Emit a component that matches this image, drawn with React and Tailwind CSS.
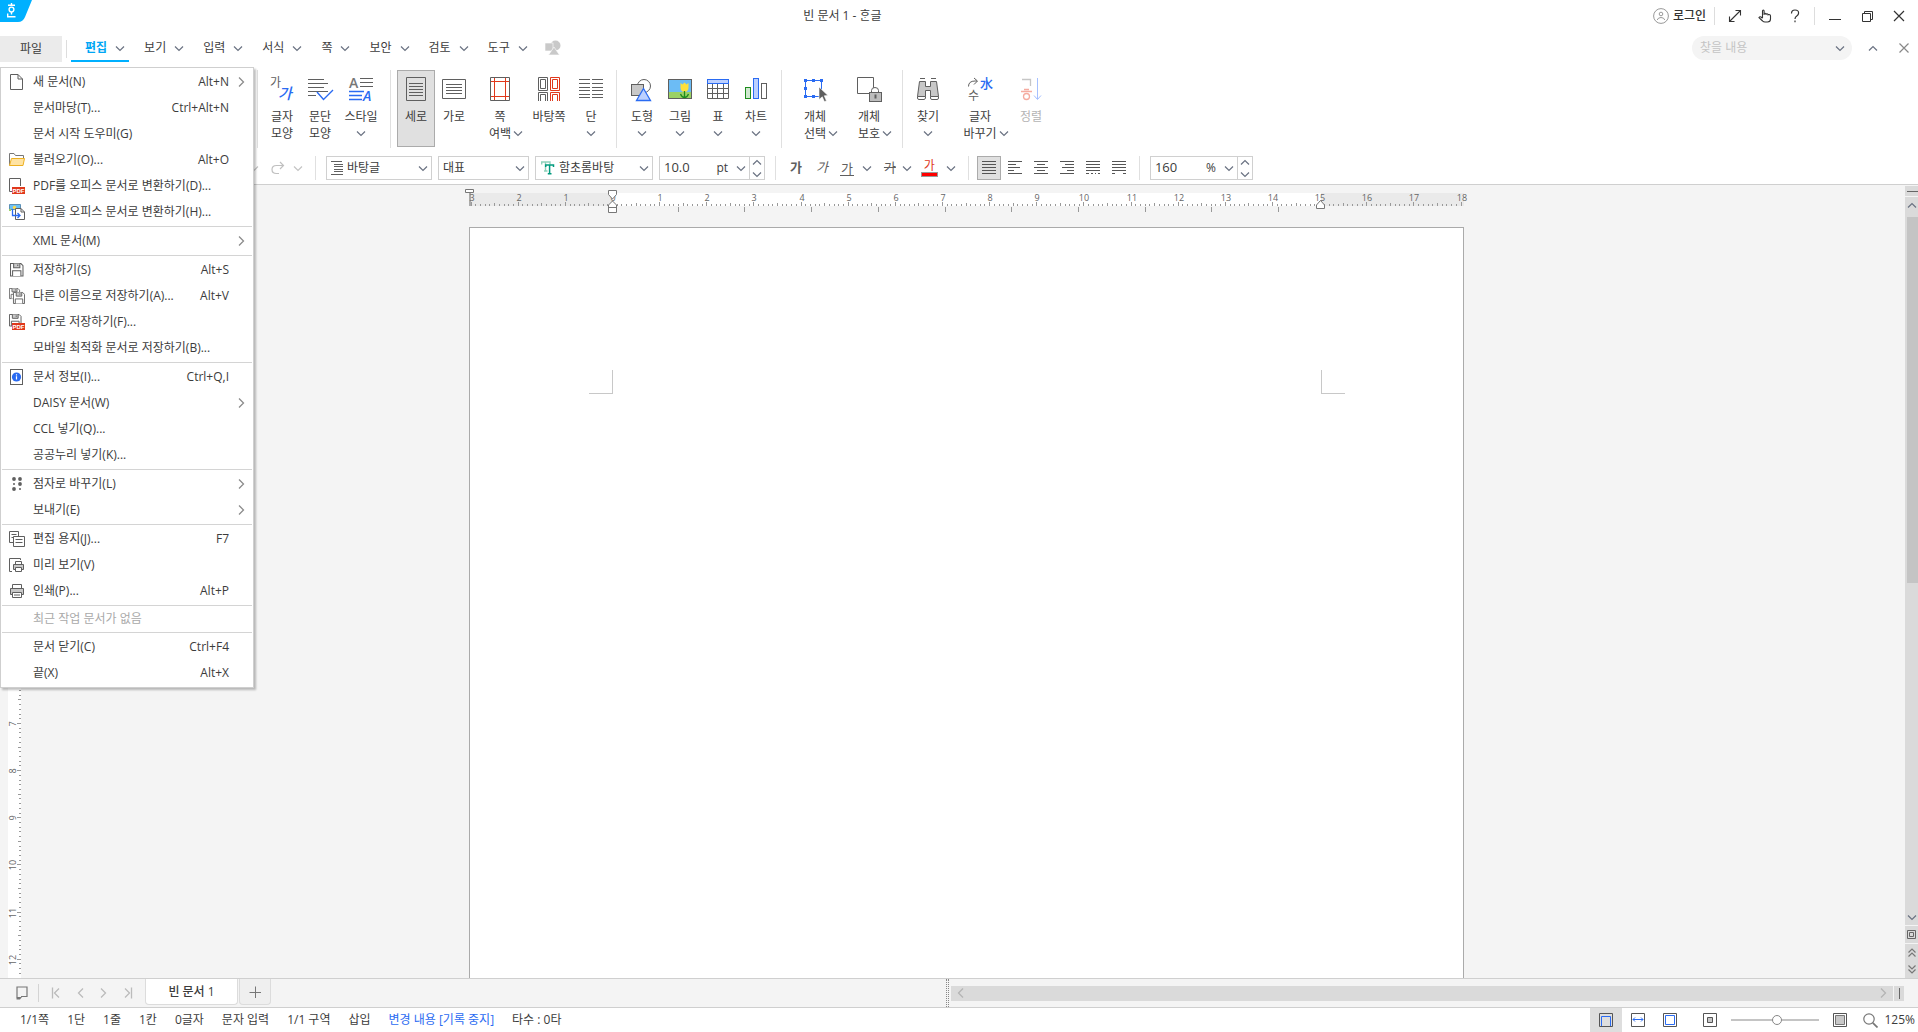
import { useState } from 'react';

const CHEVRONS = {
  down: 'M1 1.5 L5 5.5 L9 1.5',
  up: 'M1 5.5 L5 1.5 L9 5.5',
};

const Chevron = ({ dir = 'down', className = 'text-gray-500' }) => (
  <svg width="10" height="7" viewBox="0 0 10 7" fill="none" stroke="currentColor" strokeWidth="1.2" className={`shrink-0 ${className}`}>
    <path d={CHEVRONS[dir]} />
  </svg>
);

const ChevronSide = ({ flip, bar, className = 'text-[#8c8c8c]' }) => (
  <svg width="10" height="12" viewBox="0 0 10 12" fill="none" stroke="currentColor" strokeWidth="1.3" className={`shrink-0 ${flip ? '-scale-x-100' : ''} ${className}`}>
    <path d="M2 1.5 L6.5 6 L2 10.5" />
    {bar && <path d="M8.5 0.5 V11.5" />}
  </svg>
);

// ---------- menu icons (16x16) ----------

const Floppy = ({ x = 0, y = 0, s = 13 }) => (
  <g transform={`translate(${x} ${y}) scale(${s / 13})`}>
    <path d="M0.5 0.5 H10.5 L12.5 2.5 V12.5 H0.5 Z" fill="#fff" stroke="#5f5f5f" />
    <path d="M3.5 0.5 V4.5 H9.5 V0.5" fill="#c8c8c8" stroke="#5f5f5f" />
    <path d="M7.5 1.5 V3" stroke="#5f5f5f" />
    <path d="M2.5 12.5 V7.5 H10.5 V12.5" fill="#fff" stroke="#5f5f5f" />
  </g>
);

const PdfBadge = () => (
  <>
    <rect x="3" y="9" width="13" height="7" fill="#e0381b" />
    <text x="9.5" y="15" fontSize="6" fontWeight="700" textAnchor="middle" fill="#fff" fontFamily="Liberation Sans, sans-serif">PDF</text>
  </>
);

const menuIcons = {
  newDoc: (
    <path d="M1.5 0.5 H9 L13.5 5 V15.5 H1.5 Z M9 0.5 V5 H13.5" fill="#fff" stroke="#5f5f5f" />
  ),
  open: (
    <>
      <path d="M0.5 13.5 V1.5 H5 L6.5 3.5 H14.5 V6" fill="#fff" stroke="#777" />
      <path d="M2.5 6.5 H15.5 L14 13.5 H0.5 Z" fill="#ffe3a3" stroke="#edb021" />
    </>
  ),
  pdfOpen: (
    <>
      <path d="M3 13.5 H0.5 V0.5 H11.5 V8" fill="#fff" stroke="#5f5f5f" />
      <PdfBadge />
    </>
  ),
  imageOpen: (
    <>
      <path d="M0.5 0.5 H11.5 V5.5 H0.5 Z" fill="#6cc0f5" stroke="#5b8fb5" />
      <circle cx="5.5" cy="3.5" r="1.7" fill="#ffd94a" />
      <path d="M0 5 H2 V7 H0 Z" fill="#9bd165" />
      <path d="M6.5 4.5 H12 L15.5 8 V15.5 H6.5 Z" fill="#fff" stroke="#5f5f5f" />
      <path d="M12 4.5 V8 H15.5" fill="none" stroke="#5f5f5f" />
      <path d="M3.5 5 V11.5 H11 M8.5 9 L11 11.5 L8.5 14" fill="none" stroke="#2a6bf2" strokeWidth="1.3" />
    </>
  ),
  save: <Floppy x={1} y={1} s={13.5} />,
  saveAs: (
    <>
      <Floppy s={11} />
      <Floppy x={4} y={4} s={12} />
    </>
  ),
  savePdf: (
    <>
      <Floppy s={12.5} />
      <PdfBadge />
    </>
  ),
  info: (
    <>
      <rect x="1.5" y="0.5" width="12" height="15" fill="#fff" stroke="#5f5f5f" />
      <circle cx="7.5" cy="8" r="4.6" fill="#2a6bf2" />
      <path d="M7.5 7.3 V10.6 M7.5 5.2 V6.4" stroke="#fff" strokeWidth="1.2" />
    </>
  ),
  braille: (
    <g fill="#5f5f5f">
      <circle cx="5" cy="3" r="1.9" />
      <circle cx="11" cy="3" r="1.9" />
      <circle cx="5" cy="8" r="1" />
      <circle cx="11" cy="8" r="1.9" />
      <circle cx="5" cy="13" r="1.9" />
      <circle cx="11" cy="13" r="1" />
    </g>
  ),
  pageSetup: (
    <>
      <path d="M0.5 0.5 H9.5 V11.5 H0.5 Z M2.5 3.5 H7.5 M2.5 6.5 H4" fill="#fff" stroke="#5f5f5f" />
      <path d="M4.5 5.5 H15.5 V15.5 H4.5 Z M6.5 8.5 H13.5 M6.5 11.5 H13.5" fill="#fff" stroke="#5f5f5f" />
    </>
  ),
  preview: (
    <>
      <path d="M3 14.5 H0.5 V1.5 H11.5 V3" fill="#fff" stroke="#5f5f5f" />
      <path d="M6.5 7.5 V4.5 H12.5 V7.5" fill="#fff" stroke="#5f5f5f" />
      <path d="M4.5 7.5 H14.5 V12.5 H4.5 Z" fill="#c8c8c8" stroke="#5f5f5f" />
      <path d="M6.5 10.5 H12.5 V14.5 H6.5 Z" fill="#fff" stroke="#5f5f5f" />
    </>
  ),
  print: (
    <>
      <path d="M3.5 5.5 V1.5 H12.5 V5.5" fill="#fff" stroke="#5f5f5f" />
      <path d="M1.5 5.5 H14.5 V11.5 H1.5 Z" fill="#c8c8c8" stroke="#5f5f5f" />
      <path d="M3.5 9.5 H12.5 V14.5 H3.5 Z M5 12 H11" fill="#fff" stroke="#5f5f5f" />
    </>
  ),
};

const MENU = [
  [
    { label: '새 문서(N)', keys: 'Alt+N', icon: 'newDoc', sub: true },
    { label: '문서마당(T)...', keys: 'Ctrl+Alt+N' },
    { label: '문서 시작 도우미(G)' },
    { label: '불러오기(O)...', keys: 'Alt+O', icon: 'open' },
    { label: 'PDF를 오피스 문서로 변환하기(D)...', icon: 'pdfOpen' },
    { label: '그림을 오피스 문서로 변환하기(H)...', icon: 'imageOpen' },
  ],
  [{ label: 'XML 문서(M)', sub: true }],
  [
    { label: '저장하기(S)', keys: 'Alt+S', icon: 'save' },
    { label: '다른 이름으로 저장하기(A)...', keys: 'Alt+V', icon: 'saveAs' },
    { label: 'PDF로 저장하기(F)...', icon: 'savePdf' },
    { label: '모바일 최적화 문서로 저장하기(B)...' },
  ],
  [
    { label: '문서 정보(I)...', keys: 'Ctrl+Q,I', icon: 'info' },
    { label: 'DAISY 문서(W)', sub: true },
    { label: 'CCL 넣기(Q)...' },
    { label: '공공누리 넣기(K)...' },
  ],
  [
    { label: '점자로 바꾸기(L)', icon: 'braille', sub: true },
    { label: '보내기(E)', sub: true },
  ],
  [
    { label: '편집 용지(J)...', keys: 'F7', icon: 'pageSetup' },
    { label: '미리 보기(V)', icon: 'preview' },
    { label: '인쇄(P)...', keys: 'Alt+P', icon: 'print' },
  ],
  [{ label: '최근 작업 문서가 없음', disabled: true }],
  [
    { label: '문서 닫기(C)', keys: 'Ctrl+F4' },
    { label: '끝(X)', keys: 'Alt+X' },
  ],
];

const FileMenu = () => (
  <div className="absolute left-0 top-[67px] z-10 w-[254px] border border-[#cfcfcf] bg-white px-px py-px shadow-[2px_2px_2px_rgba(0,0,0,0.25)]">
    {MENU.map((group, i) => (
      <div key={group[0].label} className={i > 0 ? 'mt-px border-t border-[#d4d4d4] pt-px' : ''}>
        {group.map((item) => (
          <button
            key={item.label}
            disabled={item.disabled}
            className={`flex w-full items-center pl-[7px] pr-[5px] text-left ${item.disabled ? 'h-6 text-[#a9a9a9]' : 'h-[26px]'}`}
          >
            <span className="w-6 shrink-0">
              {item.icon && (
                <svg width="16" height="16" viewBox="0 0 16 16" fill="none">{menuIcons[item.icon]}</svg>
              )}
            </span>
            <span className="flex-1 whitespace-nowrap">{item.label}</span>
            <span>{item.keys}</span>
            <span className="flex w-[18px] justify-end">{item.sub && <ChevronSide />}</span>
          </button>
        ))}
      </div>
    ))}
  </div>
);

// ---------- title bar ----------

const TitleBar = () => (
  <header className="flex h-8 items-center">
    <svg width="32" height="22" viewBox="0 0 32 22" className="self-start" fill="none">
      <path d="M0 0 H32 L25 17 Q23 22 18 22 H0 Z" fill="#00b0ff" />
      <g stroke="#fff" strokeWidth="1.4">
        <path d="M11.5 3 V5 M8 5.2 H15" />
        <circle cx="11.5" cy="9.5" r="2.4" />
        <path d="M11.5 12 V14.5 M7.7 13.500 V16.800 H15.500" />
      </g>
    </svg>
    <h1 className="flex-1 text-center text-xs">빈 문서 1 - ᄒᆞᆫ글</h1>
    <div className="flex h-8 items-center text-[#333]">
      <button className="flex items-center gap-1 font-medium">
        <svg width="16" height="16" viewBox="0 0 16 16" fill="none" stroke="#999">
          <circle cx="8" cy="8" r="7.4" />
          <circle cx="8" cy="6" r="1.8" />
          <path d="M4.2 12 Q5 9.5 8 9.5 Q11 9.5 11.8 12" />
        </svg>
        로그인
      </button>
      <span className="ml-2 h-[18px] w-px bg-[#ddd]" />
      <button aria-label="전체 화면" className="ml-[13px]">
        <svg width="14" height="14" viewBox="0 0 14 14" fill="none" stroke="currentColor" strokeWidth="1.1">
          <path d="M1.5 12.5 L12.5 1.5 M7.5 1.5 H12.5 V6.5 M1.5 7.5 V12.5 H6.5" />
        </svg>
      </button>
      <button aria-label="터치 모드" className="ml-4">
        <svg width="14" height="14" viewBox="0 0 14 14" fill="none" stroke="currentColor" strokeWidth="1.1">
          <path d="M4.5 9 V2 Q4.5 1 5.3 1 Q6.1 1 6.1 2 V6 V4.6 Q7.3 3.8 8 4.8 V6 V5 Q9.3 4.3 10 5.3 V6.4 V5.6 Q12.5 5.2 12.5 7 V10 Q12.5 13 9.5 13 H7 Q5.5 13 4.6 12 L1 8.6 Q1.8 7.2 3 8 L4.5 9.2" />
        </svg>
      </button>
      <button aria-label="도움말" className="ml-4">
        <svg width="14" height="14" viewBox="0 0 14 14" fill="none" stroke="currentColor" strokeWidth="1.2">
          <path d="M3.5 4.5 Q3.5 1 7 1 Q10.6 1 10.6 4 Q10.6 5.8 8.8 6.9 Q7 8 7 10 M7 11.5 V13.3" />
        </svg>
      </button>
      <span className="ml-3 h-[18px] w-px bg-[#ddd]" />
      <button aria-label="최소화" className="ml-[14px]">
        <svg width="12" height="12" viewBox="0 0 12 12" stroke="currentColor"><path d="M0 9.5 H12" /></svg>
      </button>
      <button aria-label="이전 크기로" className="ml-5">
        <svg width="12" height="12" viewBox="0 0 12 12" fill="none" stroke="currentColor">
          <path d="M1.5 3.5 H9.5 V11.5 H1.5 Z M3.5 3.5 V1.5 H11.5 V9.5 H9.5" />
        </svg>
      </button>
      <button aria-label="닫기" className="ml-5 mr-[13px]">
        <svg width="12" height="12" viewBox="0 0 12 12" stroke="currentColor" strokeWidth="1.2"><path d="M1 1 L11 11 M11 1 L1 11" /></svg>
      </button>
    </div>
  </header>
);

const TABS = ['편집', '보기', '입력', '서식', '쪽', '보안', '검토', '도구'];

const MenuBar = ({ tab, setTab }) => (
  <nav className="flex h-[35px] items-start pt-1">
    <button className="h-[26px] w-[62px] bg-[#ebebeb]">파일</button>
    <span className="mx-1 mt-1 h-[18px] w-px bg-[#ddd]" />
    {TABS.map((name) => (
      <button
        key={name}
        onClick={() => setTab(name)}
        className={`mr-px flex h-[26px] items-center gap-2 border-b-2 pl-[14px] pr-1 ${
          tab === name ? 'border-[#00b0ff] font-bold text-[#00a6f4]' : 'border-transparent'
        }`}
      >
        {name}
        <Chevron />
      </button>
    ))}
    <svg width="16" height="16" viewBox="0 0 16 16" className="ml-3 mt-1" fill="#c9c9c9">
      <circle cx="10.5" cy="5.5" r="5" />
      <rect x="0" y="3" width="8" height="8" stroke="#fff" strokeWidth="0.6" />
      <path d="M9 7 L14.5 15 H3.5 Z" stroke="#fff" strokeWidth="0.6" />
    </svg>
    <div className="ml-auto flex h-6 items-center">
      <label className="flex h-6 w-40 items-center rounded-full bg-[#f4f4f4] pl-2 pr-[7px]">
        <input aria-label="찾을 내용" placeholder="찾을 내용" className="min-w-0 flex-1 bg-transparent outline-none placeholder:text-[#c4c4c4]" />
        <Chevron />
      </label>
      <button aria-label="리본 접기" className="ml-4"><Chevron dir="up" /></button>
      <button aria-label="문서 닫기" className="ml-[21px] mr-[9px]">
        <svg width="10" height="10" viewBox="0 0 10 10" stroke="#888" strokeWidth="1.2"><path d="M0.5 0.5 L9.5 9.5 M9.5 0.5 L0.5 9.5" /></svg>
      </button>
    </div>
  </nav>
);

// ---------- ribbon icons (24x24) ----------

const G = '#5f5f5f';
const B = '#2a6bf2';
const R = '#e0381b';
const KR = '"Noto Sans CJK KR", sans-serif';

const ribbonIcons = {
  charShape: (
    <>
      <text x="0" y="10" fontSize="12" fill={G} fontFamily={KR}>가</text>
      <text x="8" y="22" fontSize="15" fontStyle="italic" fontWeight="500" fill={B} fontFamily={KR}>가</text>
    </>
  ),
  paraShape: (
    <>
      <path d="M0 2.5 H16 M0 6.5 H20 M0 10.5 H16 M0 14.5 H20 M0 18.5 H8" stroke={G} />
      <path d="M9 15 L15.5 22.5 L25 13" stroke={B} strokeWidth="1.4" />
    </>
  ),
  style: (
    <>
      <text x="0" y="11" fontSize="14" fontWeight="600" fill="#777" fontFamily="Open Sans, sans-serif">A</text>
      <path d="M11 1.5 H24 M11 5.5 H24 M11 9.5 H24" stroke={G} />
      <path d="M0 14.5 H15 M0 18.5 H13 M0 22.5 H13" stroke={B} strokeWidth="1.3" />
      <text x="14" y="24" fontSize="14" fontWeight="600" fontStyle="italic" fill={B} fontFamily="Open Sans, sans-serif">A</text>
    </>
  ),
  portrait: (
    <path d="M2.5 0.5 H21.5 V23.5 H2.5 Z M5 6.5 H19 M5 9.5 H19 M5 12.5 H19 M5 15.5 H19 M5 18.5 H19" stroke={G} />
  ),
  landscape: (
    <path d="M0.5 2.5 H23.5 V21.5 H0.5 Z M4 7.5 H20 M4 10.5 H20 M4 13.5 H20 M4 16.5 H20" stroke={G} />
  ),
  margin: (
    <>
      <path d="M2.5 0.5 H21.5 V23.5 H2.5 Z" stroke={G} />
      <path d="M6.5 1 V23 M17.5 1 V23 M3 4.5 H21 M3 19.5 H21" stroke={R} />
    </>
  ),
  master: (
    <>
      <path d="M1.5 0.5 H10.5 V13.5 H1.5 Z M3.5 2.5 H8.5 V11.5 H3.5 Z M1.5 24 V15.5 H10.5 V24 M3.5 24 V17.5 H8.5 V24" stroke={G} />
      <path d="M13.5 0.5 H22.5 V13.5 H13.5 Z M15.5 2.5 H20.5 V11.5 H15.5 Z M13.5 24 V15.5 H22.5 V24 M15.5 24 V17.5 H20.5 V24" stroke={R} />
    </>
  ),
  columns: (
    <path d="M0 2.5 H11 M13 2.5 H24 M0 6.5 H11 M13 6.5 H24 M0 10.5 H11 M13 10.5 H24 M0 13.5 H11 M13 13.5 H24 M0 17.5 H11 M13 17.5 H24 M0 20.5 H11 M13 20.5 H24" stroke={G} />
  ),
  shapes: (
    <>
      <circle cx="14" cy="9" r="6.5" stroke={G} />
      <rect x="1.5" y="7.5" width="12" height="11" fill="#c8c8c8" stroke={G} />
      <path d="M13.5 11.5 L20.5 23.5 H6.5 Z" fill="#bcd0ff" stroke={B} strokeWidth="1.3" />
    </>
  ),
  picture: (
    <>
      <rect x="0.5" y="2.5" width="23" height="19" fill="#6cbcf5" stroke={G} />
      <rect x="1" y="15" width="22" height="6" fill="#9bd165" />
      <path d="M12.5 6 L14.5 7.5 L16.5 5.5 L18.5 7.5 L20.5 6 V11 Q20 15 16.5 15 Q13 15 12.5 11 Z" fill="#ffe03c" />
      <path d="M16.5 14 V20.5 M12.5 17 Q14 20.5 16.5 20.5 Q19 20.5 20.5 17" stroke="#1e8c1e" strokeWidth="1.3" />
    </>
  ),
  table: (
    <>
      <path d="M1.5 6.5 V21.5 H22.5 V6.5 M1.5 11.5 H22.5 M1.5 16.5 H22.5 M6.5 7 V21.5 M11.5 7 V21.5 M17.5 7 V21.5" stroke={G} />
      <rect x="1.5" y="2.5" width="21" height="4" fill="#bcd0ff" stroke={B} />
    </>
  ),
  chart: (
    <>
      <rect x="1.5" y="10.5" width="5" height="11" fill="#cfe8cf" stroke="#1e8c1e" />
      <rect x="9.5" y="1.5" width="5" height="20" fill="#bcd0ff" stroke={B} />
      <rect x="17.5" y="6.5" width="5" height="15" fill="#fff" stroke={G} />
    </>
  ),
  select: (
    <>
      <path d="M2.5 3.5 H18.5 V19.5 H2.5 Z" stroke={B} />
      <path d="M1 2 h3 v3 h-3z M9 2 h3 v3 h-3z M17 2 h3 v3 h-3z M1 10 h3 v3 h-3z M1 18 h3 v3 h-3z M9 18 h3 v3 h-3z" fill={B} />
      <path d="M16 10 L25 18.5 L21.3 18.8 L23.5 24 L21.3 24.5 L19.3 19.8 L16 22.5 Z" fill={G} stroke="#fff" strokeWidth="0.6" />
    </>
  ),
  protect: (
    <>
      <path d="M0.5 0.5 H16.5 V16.5 H0.5 Z" stroke={G} />
      <path d="M14.5 16 V13.5 Q14.5 10.5 18 10.5 Q21.5 10.5 21.5 13.5 V16" fill="#fff" stroke={G} />
      <rect x="12.5" y="15.5" width="12" height="9" fill="#bdbdbd" stroke={G} />
      <path d="M18.5 17.5 V21.5" stroke={G} strokeWidth="2" />
    </>
  ),
  find: (
    <>
      <path d="M4 1.5 H9 M15 1.5 H20" stroke={G} />
      <path d="M3.5 4.5 H9.5 V9.5 H14.5 V4.5 H20.5 L22.5 19.5 H14.5 V13.5 H9.5 V19.5 H1.5 Z" fill="#c8c8c8" stroke={G} />
      <path d="M1.5 19.5 H9.5 V21 Q9 22.5 8 22.5 H3 Q1.5 22.5 1.5 21 Z M14.5 19.5 H22.5 V21 Q22.5 22.5 21 22.5 H16 Q14.5 22.5 14.5 21 Z" fill="#fff" stroke={G} />
    </>
  ),
  replace: (
    <>
      <path d="M0.5 9.5 Q0.5 4 7 4 H9 M6 1 L9.5 4 L6 7.5" stroke={G} />
      <text x="12" y="11" fontSize="13" fontWeight="500" fill={B} fontFamily={KR}>水</text>
      <text x="0" y="23" fontSize="12" fill={G} fontFamily={KR}>수</text>
    </>
  ),
  sort: (
    <>
      <path d="M3 2.5 H11.5 V9" stroke="#c6c6c6" strokeWidth="1.3" />
      <path d="M5 12.5 H10 M2 14.5 H13" stroke="#f5aba0" strokeWidth="1.3" />
      <circle cx="7.5" cy="19.5" r="3" stroke="#f5aba0" strokeWidth="1.3" />
      <path d="M18.5 1 V22 M15 18.5 L18.5 22.5 L22 18.5" stroke="#a6c0ff" />
    </>
  ),
};

const RibbonButton = ({ icon, lines, width, arrow, active, disabled }) => (
  <button
    disabled={disabled}
    className={`flex h-[77px] flex-col items-center border pt-[6px] leading-[17px] ${width} ${
      active ? 'border-[#ababab] bg-[#e0e0e0]' : 'border-transparent'
    } ${disabled ? 'text-[#b4b4b4]' : ''}`}
  >
    <svg width="24" height="24" viewBox="0 0 24 24" fill="none" className="mb-[7px] shrink-0 overflow-visible">{ribbonIcons[icon]}</svg>
    <span className="whitespace-nowrap">{lines[0]}</span>
    <span className="flex h-[17px] items-center whitespace-nowrap">
      {lines[1]}
      {arrow && <Chevron className={lines[1] ? 'ml-[2px] -mr-3 text-gray-500' : 'text-gray-500'} />}
    </span>
  </button>
);

const Sep = ({ className }) => <span className={`w-px bg-[#e0e0e0] ${className}`} />;

const Ribbon = () => (
  <div className="flex h-20 items-start pl-[257px] pt-[3px]">
    <Sep className="mr-[5px] h-[78px]" />
    <RibbonButton icon="charShape" lines={['글자', '모양']} width="w-[38px]" />
    <RibbonButton icon="paraShape" lines={['문단', '모양']} width="w-[38px]" />
    <RibbonButton icon="style" lines={['스타일']} width="w-11" arrow />
    <Sep className="ml-[7px] mr-[6px] h-[78px]" />
    <RibbonButton icon="portrait" lines={['세로']} width="w-[38px]" active />
    <RibbonButton icon="landscape" lines={['가로']} width="w-[38px]" />
    <RibbonButton icon="margin" lines={['쪽', '여백']} width="w-[54px]" arrow />
    <RibbonButton icon="master" lines={['바탕쪽']} width="w-11" />
    <RibbonButton icon="columns" lines={['단']} width="w-10" arrow />
    <Sep className="ml-[5px] mr-[6px] h-[78px]" />
    <RibbonButton icon="shapes" lines={['도형']} width="w-[38px]" arrow />
    <RibbonButton icon="picture" lines={['그림']} width="w-[38px]" arrow />
    <RibbonButton icon="table" lines={['표']} width="w-[38px]" arrow />
    <RibbonButton icon="chart" lines={['차트']} width="w-[38px]" arrow />
    <Sep className="ml-[6px] mr-[10px] h-[78px]" />
    <RibbonButton icon="select" lines={['개체', '선택']} width="w-[46px]" arrow />
    <RibbonButton icon="protect" lines={['개체', '보호']} width="w-[62px]" arrow />
    <Sep className="ml-[2px] mr-[3px] h-[78px]" />
    <RibbonButton icon="find" lines={['찾기']} width="w-11" arrow />
    <RibbonButton icon="replace" lines={['글자', '바꾸기']} width="w-[60px]" arrow />
    <RibbonButton icon="sort" lines={['정렬']} width="w-[42px]" disabled />
  </div>
);

// ---------- formatting toolbar ----------

const Picker = ({ label, value, width, icon }) => (
  <label className={`mr-[6px] flex h-6 items-center border border-[#d0d0d0] pl-1 pr-[3px] ${width}`}>
    {icon}
    <select aria-label={label} className="min-w-0 flex-1 appearance-none bg-transparent outline-none">
      <option>{value}</option>
    </select>
    <Chevron />
  </label>
);

const Spinner = ({ label, value, unit, width }) => (
  <div className={`flex h-6 items-center border border-[#d0d0d0] ${width}`}>
    <input aria-label={label} defaultValue={value} className="min-w-0 flex-1 bg-transparent pl-1 text-[13px] outline-none" />
    <span className="mr-2">{unit}</span>
    <Chevron />
    <span className="ml-[3px] flex h-full w-[15px] flex-col items-center justify-between border-l border-[#d0d0d0] py-px">
      <button aria-label={`${label} 늘리기`} className="flex h-2 items-center"><Chevron dir="up" /></button>
      <button aria-label={`${label} 줄이기`} className="flex h-2 items-center"><Chevron /></button>
    </span>
  </div>
);

const ALIGN = [
  ['양쪽 정렬', 'M0 1.5 H14 M0 4.5 H14 M0 7.5 H14 M0 10.5 H14 M0 13.5 H14'],
  ['왼쪽 정렬', 'M0 1.5 H14 M0 4.5 H8 M0 7.5 H12 M0 10.5 H6 M0 13.5 H14'],
  ['가운데 정렬', 'M0 1.5 H14 M3 4.5 H11 M0 7.5 H14 M3 10.5 H11 M0 13.5 H14'],
  ['오른쪽 정렬', 'M0 1.5 H14 M5 4.5 H14 M2 7.5 H14 M7 10.5 H14 M0 13.5 H14'],
  ['배분 정렬', 'M0 1.5 H14 M0 4.5 H14 M0 7.5 H14 M0 10.5 H14 M0 13.5 H3 M5 13.5 H7 M9 13.5 H10 M12 13.5 H14'],
  ['나눔 정렬', 'M0 1.5 H14 M0 4.5 H14 M0 7.5 H14 M0 10.5 H14 M0 13.5 H3 M11 13.5 H14'],
];

const Toolbar = () => {
  const [align, setAlign] = useState('양쪽 정렬');
  return (
    <div className="flex h-[38px] items-center border-b border-[#cfcfcf] pl-[249px] pt-[5px]">
      <Chevron className="text-[#c4c4c4]" />
      <button aria-label="다시 실행" className="ml-3">
        <svg width="14" height="14" viewBox="0 0 14 14" fill="none" stroke="#c0c0c0" strokeWidth="1.2">
          <path d="M12 4.5 H5.5 Q1 4.5 1 8.5 Q1 12.5 5.5 12.5 H8 M9 1 L12.5 4.5 L9 8" />
        </svg>
      </button>
      <Chevron className="ml-2 text-[#c4c4c4]" />
      <Sep className="ml-3 mr-[10px] h-6" />
      <Picker
        label="스타일"
        value="바탕글"
        width="w-[106px]"
        icon={
          <svg width="12" height="14" viewBox="0 0 12 14" stroke="#5f5f5f" className="mr-1 shrink-0">
            <path d="M0 0.5 H11 M3 3.5 H12 M3 5.5 H12 M3 8.5 H12 M3 10.5 H12 M0 13.5 H12" />
          </svg>
        }
      />
      <Picker label="언어" value="대표" width="w-[91px]" />
      <Picker
        label="글꼴"
        value="함초롬바탕"
        width="w-[118px]"
        icon={
          <svg width="14" height="14" viewBox="0 0 14 14" fill="none" className="ml-px mr-1 shrink-0">
            <path d="M0.7 3.5 V1 H9 V3.5 M4.5 1 V10 M3 10 H6.5" stroke="#8fd1bb" strokeWidth="1.4" />
            <path d="M4.7 6 V4 H12.5 V6 M8.6 4 V12.5 M6.8 12.7 H10.5" stroke="#009a7e" strokeWidth="1.5" />
          </svg>
        }
      />
      <Spinner label="글자 크기" value="10.0" unit="pt" width="w-[106px]" />
      <Sep className="ml-[10px] mr-[14px] h-6" />
      <button className="text-[13px] font-bold text-[#5f5f5f]">가</button>
      <button className="ml-[14px] text-[13px] italic text-[#5f5f5f]">가</button>
      <button className="ml-3 border-b border-[#5f5f5f] px-px text-[13px] leading-[14px] text-[#5f5f5f]">가</button>
      <Chevron className="ml-2 text-gray-500" />
      <button className="ml-3 text-[13px] text-[#5f5f5f] line-through">가</button>
      <Chevron className="ml-[6px] text-gray-500" />
      <button className="ml-[9px] flex w-[17px] flex-col items-center text-[#e0381b]">
        <span className="leading-[13px]">가</span>
        <span className="h-[5px] w-[17px] border border-[#999] bg-[#ff0000]" />
      </button>
      <Chevron className="ml-2 text-gray-500" />
      <Sep className="ml-3 mr-2 h-6" />
      <div className="flex gap-[2px]">
        {ALIGN.map(([name, d]) => (
          <button
            key={name}
            aria-label={name}
            onClick={() => setAlign(name)}
            className={`flex size-6 items-center justify-center border ${align === name ? 'border-[#ababab] bg-[#e0e0e0]' : 'border-transparent'}`}
          >
            <svg width="14" height="14" viewBox="0 1 14 14" stroke="#555"><path d={d} /></svg>
          </button>
        ))}
      </div>
      <Sep className="ml-2 mr-[10px] h-6" />
      <Spinner label="줄 간격" value="160" unit="%" width="w-[103px]" />
    </div>
  );
};

// ---------- rulers and page ----------

const CM = 47.14;
const RULER_ZERO = 144;
const RULER_FONT = '"Open Sans", sans-serif';
const range = (from, to) => Array.from({ length: to - from + 1 }, (_, i) => from + i);
const tickSize = (n) => (n % 10 === 0 ? 4 : n % 5 === 0 ? 3 : 2);

const HorizontalRuler = () => (
  <svg width="995" height="42" viewBox="0 0 995 42" className="block overflow-visible">
    <rect x="0" y="8" width="995" height="13" fill="#eaeaea" />
    <rect x={RULER_ZERO} y="8" width="708" height="13" fill="#fff" />
    <rect x="0" y="8" width="2" height="13" fill="#aaa" />
    {range(-30, 180).map((n) => (
      <rect key={n} x={Math.round(RULER_ZERO - 1 + (n * CM) / 10)} y={21 - tickSize(n)} width="1" height={tickSize(n)} fill="#999" />
    ))}
    {range(1, 10).map((n) => (
      <rect key={n} x={Math.round(RULER_ZERO - 2 + n * 66.7)} y="22" width="1" height="5" fill="#999" />
    ))}
    {range(-3, 18).map((n) => (
      <text key={n} x={Math.round(RULER_ZERO + n * CM)} y="16" textAnchor="middle" fontSize="9" fill="#666" fontFamily={RULER_FONT}>{Math.abs(n)}</text>
    ))}
    <path d="M-3.5 4.5 H4.5 V7.5 H-3.5 Z" fill="#fff" stroke="#777" />
    <g fill="#fff" stroke="#777">
      <path d="M139.5 5.5 H147.5 V9.5 L143.5 14 L139.5 9.5 Z" />
      <path d="M143.5 16 L147.5 20 V27.5 H139.5 V20 Z M139.5 22.5 H147.5" />
      <path d="M851.5 15.5 L855.5 20 V23.5 H847.5 V20 Z" />
    </g>
  </svg>
);

const VerticalRuler = () => (
  <svg width="13" height="793" viewBox="0 0 13 793" className="block overflow-visible">
    <rect width="13" height="793" fill="#fff" />
    {range(0, 124).map((n) => {
      const y = Math.round(208 + (n * CM) / 10);
      return <rect key={n} x={13 - tickSize(n)} y={y} width={tickSize(n)} height="1" fill="#999" />;
    })}
    {range(1, 12).map((n) => {
      const y = Math.round(209 + n * CM);
      return (
        <text key={n} x="8" y={y} fontSize="9" fill="#666" textAnchor="middle" transform={`rotate(-90 8 ${y})`} fontFamily={RULER_FONT}>{n}</text>
      );
    })}
  </svg>
);

const VerticalScroll = () => (
  <div className="flex w-[13px] flex-col gap-px bg-[#f4f4f4] pt-px text-[#777]">
    <button aria-label="창 나누기" className="flex h-[10px] items-center bg-[#dadada] pl-[2px]">
      <span className="h-px w-full bg-[#666]" />
    </button>
    <div className="flex flex-1 flex-col bg-[#dadada]">
      <button aria-label="위로" className="mb-1 flex h-4 items-center justify-center"><Chevron dir="up" /></button>
      <div className="ml-[2px] h-[366px] bg-[#c4c4c4]" />
      <button aria-label="아래로" className="mt-auto flex h-4 items-center justify-center"><Chevron /></button>
    </div>
    <button aria-label="개체 찾기" className="flex h-[17px] items-center justify-center bg-[#dadada]">
      <svg width="9" height="9" viewBox="0 0 9 9" fill="none" stroke="#666"><path d="M0.5 0.5 H8.5 V8.5 H0.5 Z M2.5 2.5 H6.5 V6.5 H2.5 Z" /></svg>
    </button>
    <div className="flex h-[34px] flex-col items-center justify-around bg-[#dadada]">
      <button aria-label="이전 쪽">
        <svg width="8" height="9" viewBox="0 0 8 9" fill="none" stroke="#777" strokeWidth="1.2"><path d="M0.5 4.5 L4 1 L7.5 4.5 M0.5 8.5 L4 5 L7.5 8.5" /></svg>
      </button>
      <button aria-label="다음 쪽">
        <svg width="8" height="9" viewBox="0 0 8 9" fill="none" stroke="#777" strokeWidth="1.2"><path d="M0.5 0.5 L4 4 L7.5 0.5 M0.5 4.5 L4 8 L7.5 4.5" /></svg>
      </button>
    </div>
  </div>
);

const Editor = () => (
  <main className="flex min-h-0 flex-1 overflow-hidden bg-[#f4f4f4]">
    <div className="pl-2"><VerticalRuler /></div>
    <div className="flex min-w-0 flex-1 flex-col items-center pl-[7px]">
      <HorizontalRuler />
      <div className="flex w-[995px] flex-1 items-start justify-between border border-b-0 border-[#aaa] bg-white pl-[119px] pr-[118px] pt-[142px]">
        <span className="size-6 border-b border-r border-[#c8c8c8]" />
        <span className="size-6 border-b border-l border-[#c8c8c8]" />
      </div>
    </div>
    <VerticalScroll />
  </main>
);

// ---------- bottom bars ----------

const DocumentTabs = () => (
  <div className="flex h-[29px] items-center border-t border-[#cfcfcf] bg-[#f4f4f4]">
    <button aria-label="문서 탭 목록" className="ml-4">
      <svg width="12" height="14" viewBox="0 0 12 14" fill="none" stroke="#777" strokeWidth="1.2">
        <path d="M1 11.5 V1 H11 V10.5 H5" />
        <path d="M0.5 11 H6 L4 13.5 H0.5 Z" fill="#777" stroke="none" />
      </svg>
    </button>
    <span className="ml-[10px] h-[18px] w-px bg-[#d4d4d4]" />
    <div className="ml-3 flex items-center gap-[14px]">
      <button aria-label="처음"><ChevronSide flip bar className="text-[#bbb]" /></button>
      <button aria-label="이전"><ChevronSide flip className="text-[#bbb]" /></button>
      <button aria-label="다음"><ChevronSide className="text-[#bbb]" /></button>
      <button aria-label="마지막"><ChevronSide bar className="text-[#bbb]" /></button>
    </div>
    <button className="ml-3 h-[26px] w-[93px] self-start rounded-b border border-t-0 border-[#dcdcdc] bg-white font-medium">빈 문서 1</button>
    <button aria-label="새 탭" className="ml-px flex h-[26px] w-8 items-center justify-center self-start rounded-b border border-t-0 border-[#dcdcdc] bg-[#efefef]">
      <svg width="12" height="12" viewBox="0 0 12 12" stroke="#777"><path d="M0.5 6.5 H12 M6.5 0.5 V12" /></svg>
    </button>
    <div className="ml-auto flex h-full items-center">
      <span className="mr-[2px] h-full w-[3px] border-x border-dotted border-[#888]" />
      <div className="flex h-[15px] w-[942px] items-center justify-between bg-[#dadada] px-1">
        <button aria-label="왼쪽으로"><ChevronSide flip className="text-[#b4b4b4]" /></button>
        <button aria-label="오른쪽으로"><ChevronSide className="text-[#b4b4b4]" /></button>
      </div>
      <span className="ml-px mr-[14px] flex h-[15px] w-[10px] items-center justify-center bg-[#dadada]">
        <span className="h-[11px] w-px bg-[#666]" />
      </span>
    </div>
  </div>
);

const STATUS = ['1/1쪽', '1단', '1줄', '1칸', '0글자', '문자 입력', '1/1 구역', '삽입'];

const ViewIcon = ({ children }) => (
  <svg width="14" height="14" viewBox="0 0 14 14" fill="none">
    <path d="M0.5 0.5 H13.5 V13.5 H0.5 Z" stroke="#555" />
    {children}
  </svg>
);

const StatusBar = () => (
  <footer className="flex h-[25px] items-center border-t border-[#cfcfcf] bg-white">
    <div className="flex items-center gap-[18px] pl-5">
      {STATUS.map((s) => <span key={s}>{s}</span>)}
      <span className="text-[#2a6bf2]">변경 내용 [기록 중지]</span>
      <span>타수 : 0타</span>
    </div>
    <div className="ml-auto flex h-full items-center">
      <button aria-label="쪽 윤곽" className="flex h-full w-8 items-center justify-center bg-[#dedede]">
        <ViewIcon><path d="M2.5 13 V3.5 H11.5 V13" stroke="#2a6bf2" /></ViewIcon>
      </button>
      <button aria-label="폭 맞춤" className="flex h-full w-8 items-center justify-center">
        <ViewIcon><path d="M2 6.5 H12 M4 4.5 L2 6.5 L4 8.5 M10 4.5 L12 6.5 L10 8.5" stroke="#2a6bf2" /></ViewIcon>
      </button>
      <button aria-label="쪽 맞춤" className="flex h-full w-8 items-center justify-center">
        <ViewIcon><path d="M2.5 2.5 H11.5 V11.5 H2.5 Z" stroke="#2a6bf2" /></ViewIcon>
      </button>
      <button aria-label="축소" className="ml-[17px]">
        <ViewIcon><path d="M4.5 4.5 H9.5 V9.5 H4.5 Z" fill="#c8c8c8" stroke="#555" /></ViewIcon>
      </button>
      <input
        type="range"
        aria-label="확대 비율"
        defaultValue="52"
        className="mx-[14px] h-[2px] w-[88px] appearance-none bg-[#c4c4c4] [&::-webkit-slider-thumb]:size-[10px] [&::-webkit-slider-thumb]:appearance-none [&::-webkit-slider-thumb]:rounded-full [&::-webkit-slider-thumb]:border [&::-webkit-slider-thumb]:border-[#888] [&::-webkit-slider-thumb]:bg-white"
      />
      <button aria-label="확대">
        <ViewIcon><path d="M2.5 2.5 H11.5 V11.5 H2.5 Z" fill="#c8c8c8" stroke="#777" /></ViewIcon>
      </button>
      <button className="ml-4 flex items-center gap-[6px] pr-[3px]">
        <svg width="15" height="15" viewBox="0 0 15 15" fill="none" stroke="#777" strokeWidth="1.2">
          <circle cx="6" cy="6" r="5.2" />
          <path d="M9.8 9.8 L14.5 14.5" strokeWidth="1.7" />
        </svg>
        125%
      </button>
    </div>
  </footer>
);

const App = () => {
  const [tab, setTab] = useState('편집');

  return (
    <div className="relative flex h-screen flex-col bg-white font-['Open_Sans','Noto_Sans_CJK_KR',sans-serif] text-xs text-[#3c3c3c]">
      <TitleBar />
      <MenuBar tab={tab} setTab={setTab} />
      <Ribbon />
      <Toolbar />
      <Editor />
      <DocumentTabs />
      <StatusBar />
      <FileMenu />
    </div>
  );
};

export default App;
